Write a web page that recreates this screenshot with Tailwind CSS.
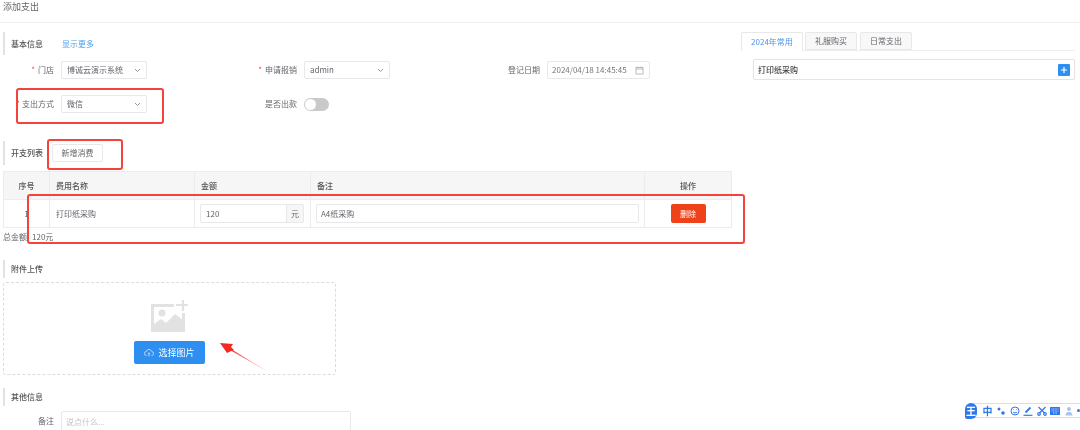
<!DOCTYPE html>
<html lang="zh-CN">
<head>
  <meta charset="UTF-8">
  <meta name="viewport" content="width=device-width, initial-scale=1.0">
  <title>添加支出</title>
  <script src="https://cdn.jsdelivr.net/npm/@tailwindcss/browser@4"></script>
</head>
<body class="bg-white">
  <div class="relative w-[1080px] h-[430px] overflow-hidden bg-white blur-[0.3px] text-[8px] text-[#62666c] font-['Noto_Sans_CJK_SC','Liberation_Sans',sans-serif]">
    <!-- page title -->
    <div class="h-[23px] border-b border-[#efefef] pl-[3px] text-[9px] leading-[14px] text-[#666]">添加支出</div>

    <div class="flex">
      <!-- left column -->
      <div class="w-[741px] shrink-0 pl-[3px]">
        <div class="mt-[9px] h-[23px] border-l-2 border-[#e2e2e2] pl-[6px] flex items-center gap-[19px]">
          <span class="font-medium text-[#555]">基本信息</span>
          <span class="text-[#4a9ff0]">显示更多</span>
        </div>

        <div class="mt-[6px] flex items-center h-[18px]">
          <label class="w-[51px] text-right"><span class="text-[#f0502c] mr-[3px]">*</span>门店</label>
          <div class="ml-[7px] w-[86px] h-[18px] border border-[#e8e8e8] rounded-[2px] flex items-center justify-between px-[5px]">
            <span>博诚云演示系统</span>
            <svg width="7" height="5" viewBox="0 0 7 5" fill="none" stroke="#8a8f96" stroke-width="0.9"><path d="M1 1l2.500 2.500L6 1"/></svg>
          </div>
          <label class="w-[150px] text-right"><span class="text-[#f0502c] mr-[3px]">*</span>申请报销</label>
          <div class="ml-[7px] w-[86px] h-[18px] border border-[#e8e8e8] rounded-[2px] flex items-center justify-between px-[5px]">
            <span>admin</span>
            <svg width="7" height="5" viewBox="0 0 7 5" fill="none" stroke="#8a8f96" stroke-width="0.9"><path d="M1 1l2.500 2.500L6 1"/></svg>
          </div>
          <label class="w-[150px] text-right">登记日期</label>
          <div class="ml-[7px] w-[103px] h-[18px] border border-[#e8e8e8] rounded-[2px] flex items-center justify-between pl-[4px] pr-[5px]">
            <span class="text-[#777]">2024/04/18 14:45:45</span>
            <svg width="9" height="9" viewBox="0 0 9 9" fill="none" stroke="#a9adb3" stroke-width="0.8"><rect x="1" y="1.500" width="7" height="6.500"/><path d="M1 3h7M3 .5v1.500M6 .5v1.500"/></svg>
          </div>
        </div>

        <div class="mt-[16px] flex items-center h-[18px]">
          <label class="w-[51px] text-right whitespace-nowrap"><span class="text-[#f0502c] mr-[2px]">*</span>支出方式</label>
          <div class="ml-[7px] w-[86px] h-[18px] border border-[#e8e8e8] rounded-[2px] flex items-center justify-between px-[5px]">
            <span>微信</span>
            <svg width="7" height="5" viewBox="0 0 7 5" fill="none" stroke="#8a8f96" stroke-width="0.9"><path d="M1 1l2.500 2.500L6 1"/></svg>
          </div>
          <label class="w-[150px] text-right">是否出款</label>
          <div class="ml-[7px] w-[25px] h-[13px] rounded-full bg-[#c9c9c9] p-[1px]">
            <div class="w-[11px] h-[11px] rounded-full bg-white"></div>
          </div>
        </div>

        <div class="mt-[28px] h-[24px] border-l-2 border-[#e2e2e2] pl-[6px] flex items-center gap-[9px]">
          <span class="font-medium text-[#555]">开支列表</span>
          <button class="w-[51px] h-[18px] border border-[#e8e8e8] rounded-[2px] bg-white text-[#666]">新增消费</button>
        </div>

        <!-- expense table -->
        <table class="mt-[6px] w-[729px] table-fixed border-collapse border border-[#ececec]">
          <thead>
            <tr class="h-[28px] bg-[#f6f6f6] text-[#555]">
              <th class="w-[46px] border border-[#ececec] font-medium">序号</th>
              <th class="w-[145px] border border-[#ececec] font-medium text-left pl-[6px]">费用名称</th>
              <th class="w-[116px] border border-[#ececec] font-medium text-left pl-[6px]">金额</th>
              <th class="w-[334px] border border-[#ececec] font-medium text-left pl-[6px]">备注</th>
              <th class="border border-[#ececec] font-medium">操作</th>
            </tr>
          </thead>
          <tbody>
            <tr class="h-[28px]">
              <td class="border border-[#ececec] text-center">1</td>
              <td class="border border-[#ececec] pl-[6px]">打印纸采购</td>
              <td class="border border-[#ececec] pl-[5px] pr-[6px]">
                <div class="flex items-center h-[19px] border border-[#e8e8e8] rounded-[2px]">
                  <span class="flex-1 pl-[5px]">120</span>
                  <span class="w-[17px] h-full flex items-center justify-center bg-[#f6f6f6] border-l border-[#e8e8e8]">元</span>
                </div>
              </td>
              <td class="border border-[#ececec] pl-[5px] pr-[5px]">
                <div class="flex items-center h-[19px] border border-[#e8e8e8] rounded-[2px] pl-[4px]">A4纸采购</div>
              </td>
              <td class="border border-[#ececec] text-center">
                <button class="w-[35px] h-[19px] rounded-[2px] bg-[#f0421a] text-white">删除</button>
              </td>
            </tr>
          </tbody>
        </table>

        <div class="mt-[3px] h-[12px] leading-[12px] whitespace-nowrap"><span class="mr-[1px]">总金额:</span> 120元</div>

        <div class="mt-[17px] h-[18px] border-l-2 border-[#e2e2e2] pl-[6px] flex items-center">
          <span class="font-medium text-[#555]">附件上传</span>
        </div>

        <!-- upload area -->
        <div class="mt-[4px] w-[333px] h-[93px] border border-dashed border-[#dcdcdc] rounded-[3px] flex flex-col items-center pt-[17px]">
          <svg class="ml-[1px]" width="38" height="33" viewBox="0 0 38 33">
            <path d="M23 5.500H1.500V30.500H32.500V13" fill="none" stroke="#e2e2e2" stroke-width="3"/>
            <path d="M32 0v11M25 5h12" fill="none" stroke="#e2e2e2" stroke-width="2.200"/>
            <circle cx="11" cy="13" r="3.500" fill="#e2e2e2"/>
            <path d="M3 24l7-5 5 4 9-9 8 6v11H3z" fill="#e2e2e2"/>
          </svg>
          <button class="mt-[8px] w-[71px] h-[23px] rounded-[2px] bg-[#2f8ff0] text-white text-[9px] flex items-center justify-center gap-[4px]">
            <svg width="10" height="8" viewBox="0 0 10 8" fill="none" stroke="#cfe5fb" stroke-width="0.8"><path d="M2.500 6.500a2 2 0 0 1-.2-4 2.800 2.800 0 0 1 5.400 0 2 2 0 0 1-.2 4M5 7.500V3.800M3.700 5L5 3.800 6.300 5"/></svg>
            选择图片
          </button>
        </div>

        <div class="mt-[13px] h-[18px] border-l-2 border-[#e2e2e2] pl-[6px] flex items-center">
          <span class="font-medium text-[#555]">其他信息</span>
        </div>

        <div class="mt-[5px] flex">
          <label class="w-[51px] text-right pt-[4px]">备注</label>
          <div class="ml-[7px] w-[290px] h-[40px] border border-[#e8e8e8] rounded-[2px] pl-[4px] pt-[4px] text-[#c4c4c4]">说点什么...</div>
        </div>
      </div>

      <!-- right column -->
      <div class="flex-1 pt-[9px] pr-[5px]">
        <div class="flex h-[19px] gap-[2px] border-b border-[#eee]">
          <div class="w-[62px] h-[19px] border border-b-0 border-[#e8e8e8] bg-white text-[#4a94ea] flex items-center justify-center rounded-t-[2px]">2024年常用</div>
          <div class="w-[52px] h-[18px] border border-[#e8e8e8] bg-[#f8f8f8] flex items-center justify-center rounded-t-[2px]">礼服购买</div>
          <div class="w-[52px] h-[18px] border border-[#e8e8e8] bg-[#f8f8f8] flex items-center justify-center rounded-t-[2px] ml-[1px]">日常支出</div>
        </div>
        <div class="ml-[12px] mt-[8px] h-[21px] border border-[#e4e4e4] rounded-[2px] shadow-[0_0_1px_rgba(0,0,0,0.1)] flex items-center justify-between pl-[4px] pr-[4px]">
          <span class="font-medium text-[#444]">打印纸采购</span>
          <span class="w-[12px] h-[12px] rounded-[1px] bg-[#2f8ff0] flex items-center justify-center">
            <svg width="8" height="8" viewBox="0 0 8 8" stroke="#fff" stroke-width="1.200"><path d="M4 1v6M1 4h6"/></svg>
          </span>
        </div>
      </div>
    </div>

    <!-- red annotations over the screenshot -->
    <div class="absolute left-[16px] top-[88px] w-[148px] h-[36px] border-2 border-[#f4433a] rounded-[3px]"></div>
    <div class="absolute left-[47px] top-[139px] w-[76px] h-[31px] border-2 border-[#f4433a] rounded-[3px]"></div>
    <div class="absolute left-[27px] top-[194px] w-[718px] h-[50px] border-2 border-[#f4433a] rounded-[3px]"></div>
    <svg class="absolute left-[215px] top-[338px]" width="60" height="40" viewBox="0 0 60 40">
      <defs>
        <linearGradient id="tail" x1="13" y1="10" x2="56" y2="35" gradientUnits="userSpaceOnUse">
          <stop offset="0" stop-color="#f4291f"/>
          <stop offset="1" stop-color="#f4291f" stop-opacity="0.15"/>
        </linearGradient>
      </defs>
      <path d="M12 8.500L14 11.500L56 35.500z" fill="url(#tail)"/>
      <path d="M5 5l13 1-2 3 3 3-5 2-2 1z" fill="#f4291f"/>
    </svg>

    <!-- IME toolbar -->
    <div class="absolute left-[965px] top-[402px] w-[115px] h-[17px] flex items-center">
      <div class="absolute left-[8px] top-[1px] w-[120px] h-[15px] bg-white border border-[#cfe0fa]"></div>
      <div class="relative z-10 w-[16px] h-[16px] rounded-[8px] rounded-bl-[3px] bg-[#2f78ec] text-white text-[10px] font-bold text-center leading-[16px]">王</div>
      <div class="relative z-10 ml-[5.500px] flex items-center gap-[3.500px] text-[#2f78ec]">
        <span class="w-[10px] text-[10px] font-bold text-center leading-none">中</span>
        <svg width="10" height="10" viewBox="0 0 10 10" fill="#2f78ec"><circle cx="3" cy="3" r="1.500"/><circle cx="7" cy="7" r="1.800"/></svg>
        <svg width="10" height="10" viewBox="0 0 10 10" fill="none" stroke="#2f78ec"><circle cx="5" cy="5" r="4"/><path d="M3 6c1 1.200 3 1.200 4 0M3.500 3.500v.5M6.500 3.500v.5"/></svg>
        <svg width="10" height="10" viewBox="0 0 10 10" fill="none" stroke="#2f78ec" stroke-width="1.800"><path d="M2.500 6.500L7.500 1.500"/><path d="M.5 9.300h9" stroke-width="1.200"/></svg>
        <svg width="10" height="10" viewBox="0 0 10 10" fill="none" stroke="#2f78ec" stroke-width="1.200"><path d="M1.500 1l6 6M8.500 1l-6 6"/><circle cx="2" cy="8" r="1.300"/><circle cx="8" cy="8" r="1.300"/></svg>
        <svg width="10" height="10" viewBox="0 0 10 10" fill="#2f78ec"><rect y="1" width="10" height="8" rx="0.500"/><path d="M1.500 3h7M1.500 5h7M3 7h4" stroke="#fff" stroke-width="0.700" stroke-dasharray="1 0.600"/></svg>
        <svg width="10" height="10" viewBox="0 0 10 10" fill="#a9c4ee"><circle cx="5" cy="3" r="2"/><path d="M1.500 9.500c0-5 7-5 7 0z"/></svg>
        <span class="w-[3px] h-[3px] rounded-full bg-[#2f78ec]"></span>
      </div>
    </div>
  </div>
</body>
</html>
